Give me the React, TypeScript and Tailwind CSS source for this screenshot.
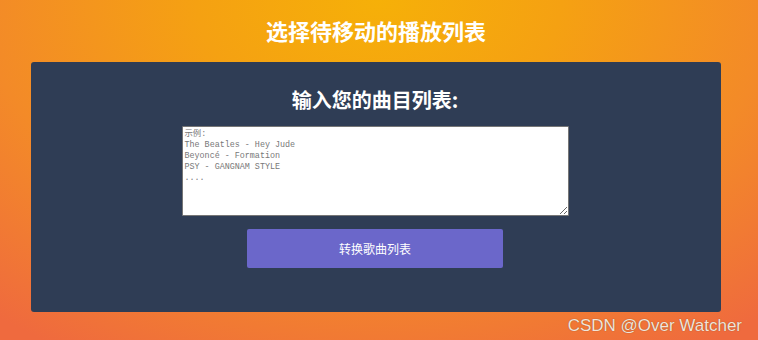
import React from 'react';

const placeholder = `示例:
The Beatles - Hey Jude
Beyoncé - Formation
PSY - GANGNAM STYLE
....`;

export default function App() {
  return (
    <div
      className="relative w-[758px] h-[340px] overflow-hidden bg-[radial-gradient(ellipse_80%_120%_at_50%_0%,#f6b008_0%,#f5a112_30%,#f38a28_65%,#ef6a3e_100%)]"
      style={{ fontFamily: '"Noto Sans CJK SC", "Noto Sans", sans-serif' }}
    >
      {/* Title */}
      <h1 className="h-[62px] pr-[6px] flex items-center justify-center text-[22px] font-bold text-white leading-none pb-[2px]">
        选择待移动的播放列表
      </h1>

      {/* Card */}
      <div className="ml-[31px] w-[690px] h-[250px] pr-[2px] bg-[#2f3d55] rounded-[3px] flex flex-col items-center">
        <h2 className="mt-[26px] h-[24px] flex items-center text-[20px] font-bold text-white leading-none">
          输入您的曲目列表:
        </h2>
        <textarea
          placeholder={placeholder}
          className="mt-[14px] w-[387px] h-[90px] bg-white border border-[#767676] rounded-[1px] px-[2px] pt-[2px] text-[8.4px] leading-[11px] text-[#333] placeholder:text-[#777] resize-y outline-none"
          style={{ fontFamily: '"Liberation Mono", "Noto Sans CJK SC", monospace' }}
        />
        <button className="mt-[13px] w-[256px] h-[39px] bg-[#6b67ca] rounded-[2px] text-white text-[12px] leading-none">
          转换歌曲列表
        </button>
      </div>

      {/* Watermark */}
      <div
        className="absolute right-[16px] bottom-[6px] text-[17px] text-[#f3e4d8] leading-none [text-shadow:0_0_1px_rgba(90,50,20,0.7)]"
        style={{ fontFamily: '"Liberation Sans", Arial, sans-serif' }}
      >
        CSDN @Over Watcher
      </div>
    </div>
  );
}
